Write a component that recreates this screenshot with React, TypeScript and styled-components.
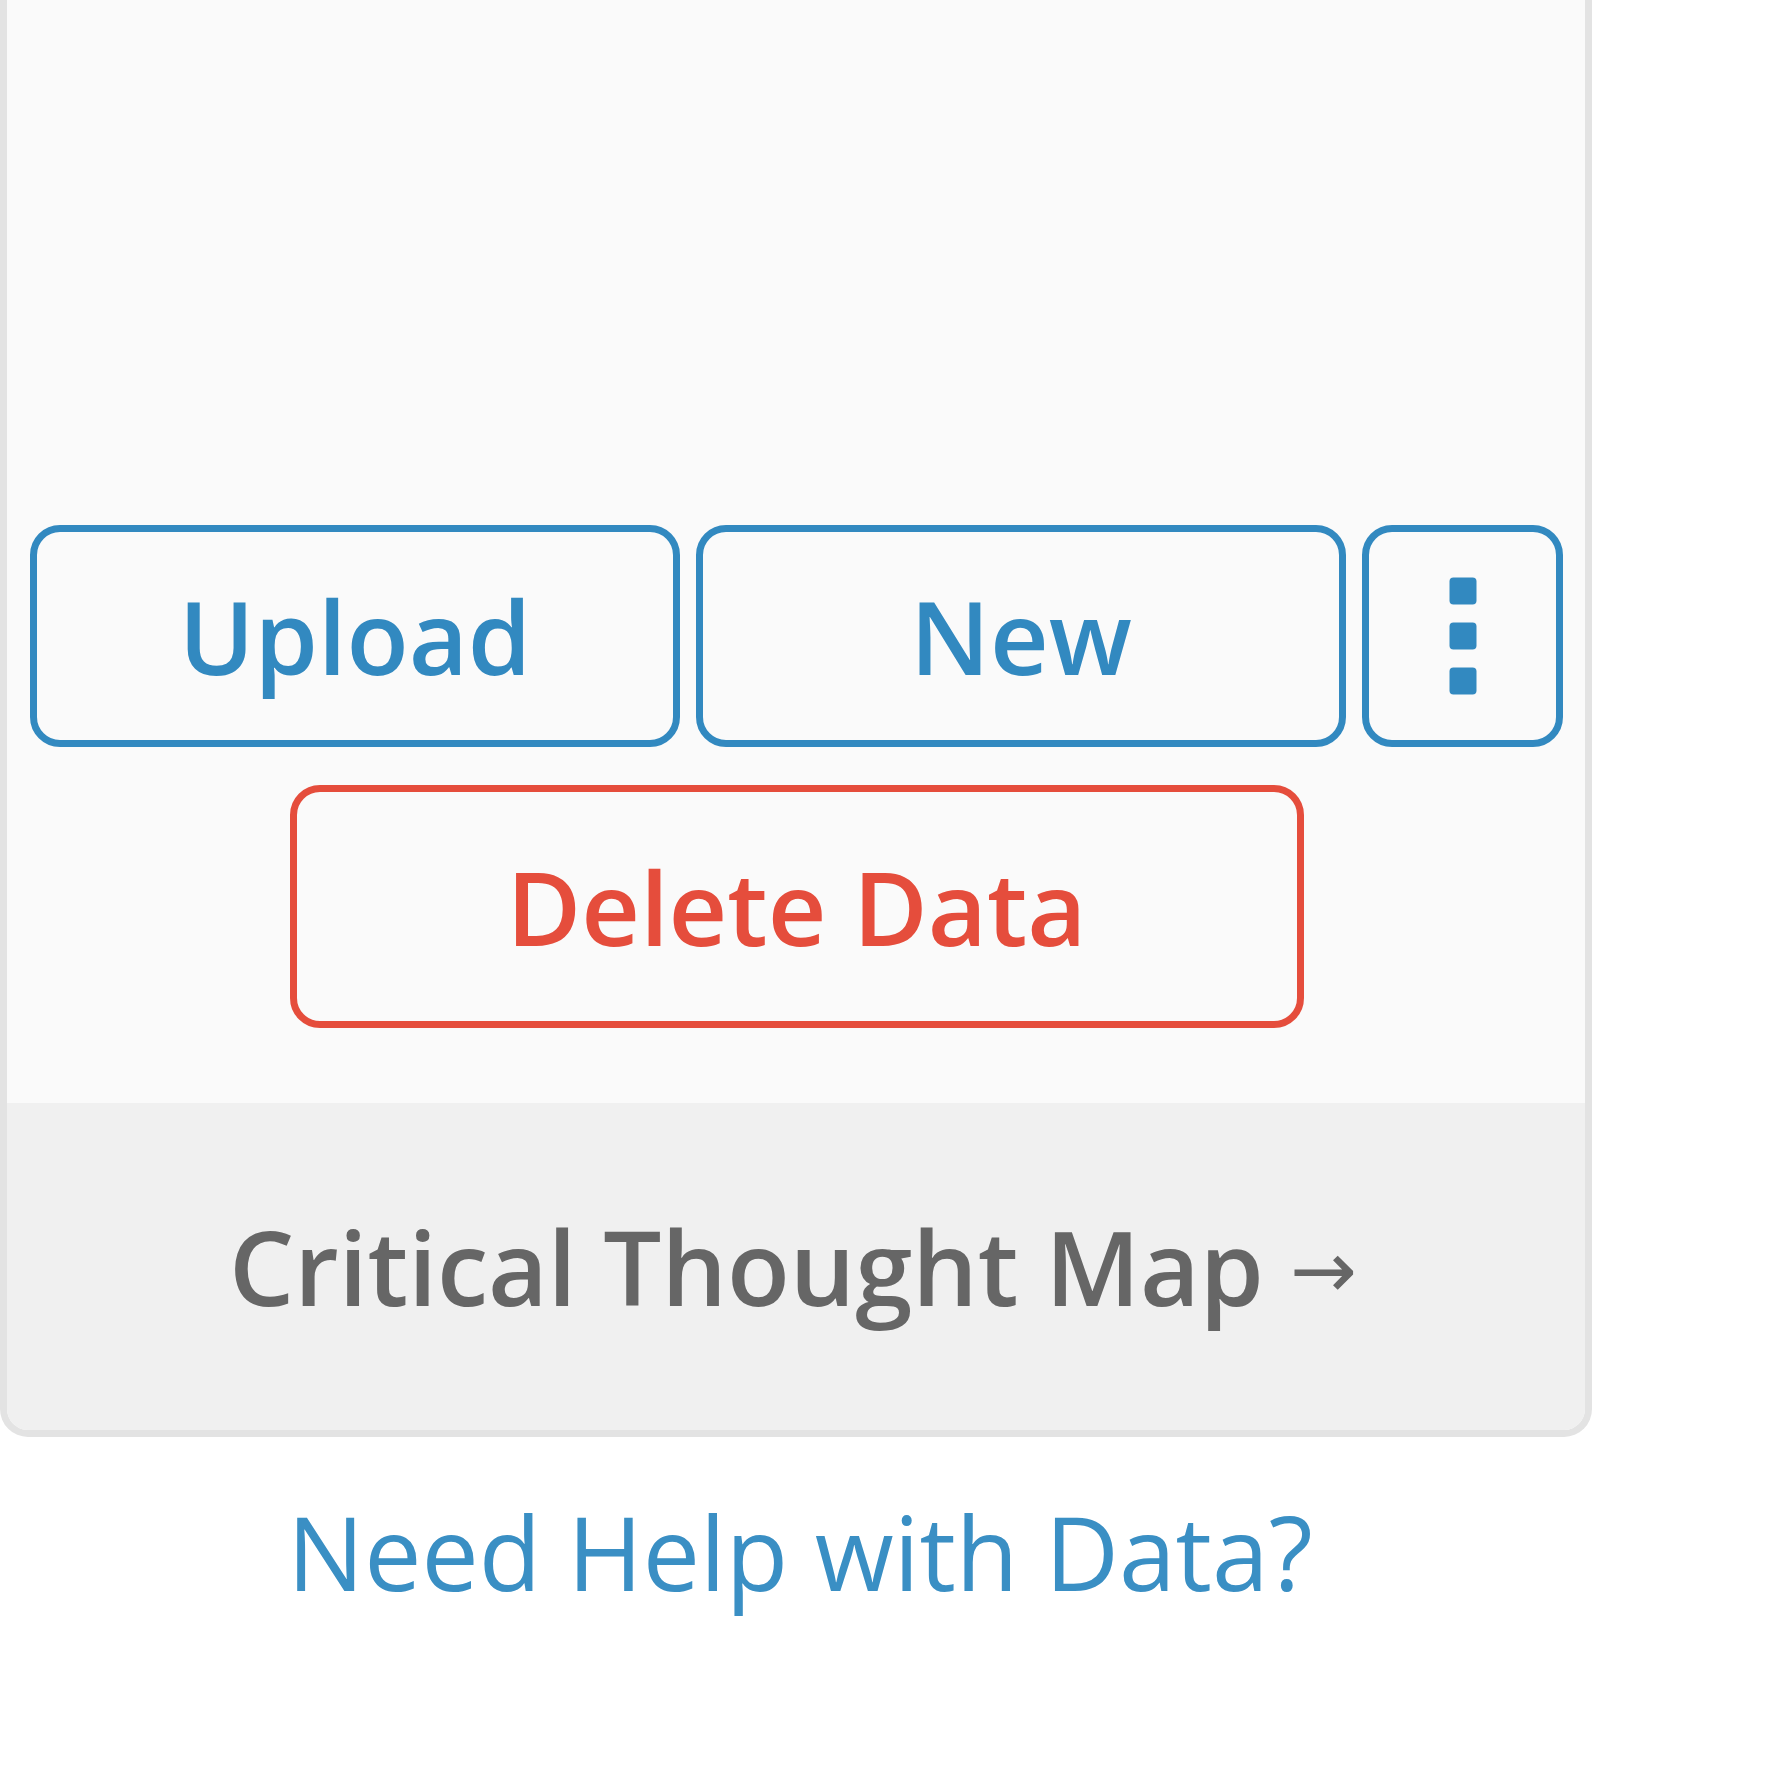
import React from "react";
import styled, { createGlobalStyle } from "styled-components";

const GlobalStyle = createGlobalStyle`
  html, body {
    margin: 0;
    padding: 0;
    background: #ffffff;
  }
  body {
    font-family: "Open Sans", "Noto Sans", "Liberation Sans", sans-serif;
  }
  * { box-sizing: border-box; }
`;

const Page = styled.div`
  width: 1592px;
  display: flex;
  flex-direction: column;
`;

const Card = styled.div`
  width: 1592px;
  background: #fafafa;
  border: 7px solid #e3e3e3;
  border-top: none;
  border-radius: 0 0 28px 28px;
  overflow: hidden;
`;

const CardBody = styled.div`
  padding: 525px 22px 75px 23px;
  display: flex;
  flex-direction: column;
  align-items: center;
`;

const ButtonRow = styled.div`
  width: 100%;
  display: flex;
  gap: 16px;
`;

const OutlineButton = styled.button<{ $tone: "blue" | "red"; $w?: number; $h: number }>`
  ${(p) => (p.$w ? `width: ${p.$w}px; flex: none;` : `flex: 1 1 0;`)}
  height: ${(p) => p.$h}px;
  display: flex;
  align-items: center;
  justify-content: center;
  padding: 0;
  margin: 0;
  background: #fafafa;
  border: 7px solid ${(p) => (p.$tone === "blue" ? "#3289c0" : "#e54d3c")};
  color: ${(p) => (p.$tone === "blue" ? "#3289c0" : "#e54d3c")};
  border-radius: 30px;
  font-family: "Open Sans", "Noto Sans", sans-serif;
  font-weight: 600;
  font-size: 102px;
  line-height: 1;
  cursor: pointer;
`;

const DeleteButton = styled(OutlineButton)`
  margin-top: 38px;
`;

const Footer = styled.div`
  height: 327px;
  background: #f0f0f0;
  display: flex;
  align-items: center;
  justify-content: center;
  color: #666666;
  font-weight: 600;
  font-size: 103px;
  line-height: 1;
  padding-right: 6px;
`;

const Arrow = styled.span`
  font-family: "DejaVu Sans", sans-serif;
  font-weight: 400;
  font-size: 80px;
  margin-left: 26px;
  position: relative;
  top: 4px;
`;

const HelpLink = styled.a`
  display: block;
  margin-top: 42px;
  text-align: center;
  padding-left: 8px;
  color: #3a8fc4;
  font-size: 102px;
  font-weight: 400;
  line-height: 146px;
  text-decoration: none;
`;

const DotsIcon = () => (
  <svg width="28" height="118" viewBox="0 0 28 118" aria-hidden="true">
    <rect x="0.5" y="0.5" width="27" height="27" rx="4" fill="currentColor" />
    <rect x="0.5" y="45.5" width="27" height="27" rx="4" fill="currentColor" />
    <rect x="0.5" y="90.5" width="27" height="27" rx="4" fill="currentColor" />
  </svg>
);

export default function App() {
  return (
    <>
      <GlobalStyle />
      <Page>
        <Card>
          <CardBody>
            <ButtonRow>
              <OutlineButton $tone="blue" $h={222}>Upload</OutlineButton>
              <OutlineButton $tone="blue" $h={222}>New</OutlineButton>
              <OutlineButton $tone="blue" $h={222} $w={201}>
                <DotsIcon />
              </OutlineButton>
            </ButtonRow>
            <DeleteButton $tone="red" $h={243} $w={1014}>Delete Data</DeleteButton>
          </CardBody>
          <Footer>
            Critical Thought Map<Arrow>→</Arrow>
          </Footer>
        </Card>
        <HelpLink href="#">Need Help with Data?</HelpLink>
      </Page>
    </>
  );
}
